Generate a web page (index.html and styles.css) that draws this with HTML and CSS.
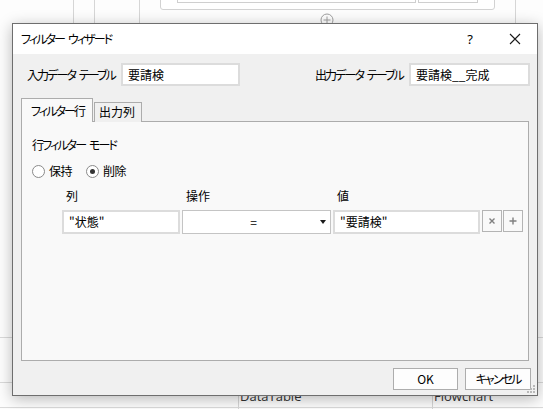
FILE: index.html
```html
<!DOCTYPE html>
<html lang="ja">
<head>
<meta charset="utf-8">
<title>フィルター ウィザード</title>
<link rel="stylesheet" href="styles.css">
</head>
<body>
<div class="desk">
  <div class="bg-vline" style="left:73px"></div>
  <div class="bg-vline" style="left:94px"></div>
  <div class="bg-vline" style="left:139px"></div>
  <div class="bg-vline" style="left:515px"></div>
  <div class="bg-card">
    <div class="bg-field bg-field-a"></div>
    <div class="bg-field bg-field-b"></div>
  </div>
  <div class="bg-plus">
    <svg width="14" height="14" viewBox="0 0 14 14"><circle cx="7" cy="7" r="6" fill="none" stroke="#a0a0a0" stroke-width="1"/><path d="M7 3.5v7M3.5 7h7" stroke="#a0a0a0" stroke-width="1"/></svg>
  </div>
  <div class="bg-hline" style="top:337px"></div>
  <div class="bg-hline" style="top:382px"></div>
  <div class="bg-hline" style="top:407px"></div>
  <div class="bg-bline" style="left:238px"></div>
  <div class="bg-bline" style="left:432px"></div>
  <div class="bg-text" style="left:240px">DataTable</div>
  <div class="bg-text" style="left:434px">Flowchart</div>

  <div class="dialog">
    <div class="titlebar">
      <span class="title kana">フィルター ウィザード</span>
      <span class="help">?</span>
      <span class="close">
        <svg width="12" height="12" viewBox="0 0 12 12"><path d="M1 1L11 11M11 1L1 11" stroke="#1a1a1a" stroke-width="1.1"/></svg>
      </span>
    </div>
    <div class="body">
      <div class="tables-row">
        <div class="field-group">
          <span class="label kana">入力データ テーブル</span>
          <div class="textbox tb-in">要請検</div>
        </div>
        <div class="field-group">
          <span class="label kana">出力データ テーブル</span>
          <div class="textbox tb-out">要請検__完成</div>
        </div>
      </div>
      <div class="tabs">
        <div class="tab tab-active"><span class="kana">フィルター行</span></div>
        <div class="tab">出力列</div>
      </div>
      <div class="panel">
        <div class="mode-label kana">行フィルター モード</div>
        <div class="radio-row">
          <span class="radio"><span class="radio-dot"></span></span><span class="radio-text">保持</span>
          <span class="radio radio-on"><span class="radio-dot"></span></span><span class="radio-text">削除</span>
        </div>
        <div class="grid">
          <div class="head">列</div>
          <div class="head">操作</div>
          <div class="head">値</div>
          <div></div>
          <div class="cell-input">"状態"</div>
          <div class="select"><span class="select-val">=</span><span class="arrow"></span></div>
          <div class="cell-input">"要請検"</div>
          <div class="btn-pair">
            <div class="mini-btn">
              <svg width="8" height="8" viewBox="0 0 8 8"><path d="M1.5 1.5L6.5 6.5M6.5 1.5L1.5 6.5" stroke="#808080" stroke-width="1.4"/></svg>
            </div>
            <div class="mini-btn">
              <svg width="8" height="8" viewBox="0 0 8 8"><path d="M4 0.5v7M0.5 4h7" stroke="#808080" stroke-width="1.4"/></svg>
            </div>
          </div>
        </div>
      </div>
      <div class="footer">
        <div class="button">OK</div>
        <div class="button btn-cancel"><span class="kana">キャンセル</span></div>
      </div>
      <div class="grip">
        <svg width="10" height="10" viewBox="0 0 10 10" fill="#b8b8b8"><rect x="7" y="1" width="2" height="2"/><rect x="4" y="4" width="2" height="2"/><rect x="7" y="4" width="2" height="2"/><rect x="1" y="7" width="2" height="2"/><rect x="4" y="7" width="2" height="2"/><rect x="7" y="7" width="2" height="2"/></svg>
      </div>
    </div>
  </div>
</div>
</body>
</html>
```

FILE: styles.css
```css
* { box-sizing: border-box; }
html, body { margin: 0; padding: 0; }
body {
  width: 543px;
  height: 409px;
  overflow: hidden;
  background: #ffffff;
  font-family: "Noto Sans CJK JP", "Noto Sans", sans-serif;
  font-size: 12px;
  color: #000;
  font-feature-settings: "palt" 1;
}
.kana {
  letter-spacing: -1.9px;
  word-spacing: 3px;
  white-space: nowrap;
}
.desk {
  position: relative;
  width: 543px;
  height: 409px;
  overflow: hidden;
  background: #fdfdfd;
}
.bg-vline {
  position: absolute;
  top: 0;
  width: 1px;
  height: 30px;
  background: #d6d6d6;
}
.bg-card {
  position: absolute;
  left: 160px;
  top: -10px;
  width: 335px;
  height: 20px;
  border: 1px solid #d2d2d2;
  border-radius: 3px;
  background: #fff;
}
.bg-field {
  position: absolute;
  top: 0;
  height: 12px;
  border: 1px solid #cfcfcf;
  background: #fff;
}
.bg-field-a { left: 16px; width: 239px; }
.bg-field-b { left: 257px; width: 60px; }
.bg-plus {
  position: absolute;
  left: 320px;
  top: 13px;
  width: 14px;
  height: 14px;
}
.bg-plus svg { display: block; }
.bg-hline {
  position: absolute;
  left: 0;
  width: 543px;
  height: 1px;
  background: #dadada;
}
.bg-bline {
  position: absolute;
  top: 390px;
  width: 1px;
  height: 19px;
  background: #d6d6d6;
}
.bg-text {
  position: absolute;
  top: 388px;
  font-family: "Open Sans", "Noto Sans", sans-serif;
  font-size: 13px;
  line-height: 16px;
  color: #333;
}

.dialog {
  position: absolute;
  left: 12px;
  top: 23px;
  width: 526px;
  height: 373px;
  border: 1px solid #6e6e6e;
  background: #f0f0f0;
  box-shadow: 0 3px 14px rgba(0, 0, 0, 0.28);
  display: flex;
  flex-direction: column;
}
.titlebar {
  height: 30px;
  flex: none;
  background: #ffffff;
  display: flex;
  align-items: center;
  padding-left: 8px;
}
.title {
  flex: 1;
  font-size: 12px;
  line-height: 16px;
  color: #000;
}
.help {
  width: 14px;
  text-align: center;
  font-family: "Noto Sans", sans-serif;
  font-size: 13px;
  margin-right: 32px;
}
.close {
  width: 12px;
  height: 12px;
  margin-right: 16px;
  display: flex;
}
.close svg { display: block; }

.body {
  position: relative;
  flex: 1;
  display: flex;
  flex-direction: column;
  padding: 9px 6px 5px 8px;
}
.tables-row {
  display: flex;
  justify-content: space-between;
  align-items: center;
  height: 23px;
  padding-left: 6px;
  padding-right: 1px;
}
.field-group {
  display: flex;
  align-items: center;
}
.label {
  line-height: 16px;
  margin-right: 6px;
}
.textbox {
  height: 23px;
  background: #fff;
  border: 2px solid #dcdcdc;
  padding: 0 5px;
  line-height: 19px;
  white-space: nowrap;
}
.tb-in { width: 119px; }
.tb-out { width: 121px; }

.tabs {
  display: flex;
  align-items: flex-end;
  margin-top: 12px;
  height: 24px;
  margin-bottom: -1px;
  position: relative;
  z-index: 1;
}
.tab {
  height: 20px;
  border: 1px solid #acacac;
  border-bottom: none;
  background: #f0f0f0;
  padding: 0 0 0 4px;
  line-height: 18px;
  width: 48px;
  margin-left: 1px;
  white-space: nowrap;
}
.tab-active {
  height: 24px;
  width: 72px;
  margin-left: 0;
  background: #f9f9f9;
  padding: 0 0 0 9px;
  line-height: 23px;
}

.panel {
  width: 508px;
  height: 240px;
  border: 1px solid #acacac;
  background: #f9f9f9;
  padding: 15px 10px 0 10px;
}
.mode-label {
  line-height: 16px;
}
.radio-row {
  display: flex;
  align-items: center;
  margin-top: 10px;
  height: 16px;
}
.radio {
  width: 13px;
  height: 13px;
  border: 1px solid #8a8a8a;
  border-radius: 50%;
  background: #fff;
  display: flex;
  align-items: center;
  justify-content: center;
}
.radio-dot {
  width: 5px;
  height: 5px;
  border-radius: 50%;
  background: transparent;
}
.radio-on .radio-dot { background: #333; }
.radio-text {
  margin-left: 4px;
  margin-right: 14px;
  line-height: 16px;
  letter-spacing: -0.5px;
}

.grid {
  display: grid;
  grid-template-columns: 118px 149px 147px 41px;
  column-gap: 2px;
  margin-left: 30px;
  margin-top: 9px;
}
.head {
  line-height: 16px;
  padding-left: 4px;
  margin-bottom: 6px;
}
.cell-input {
  height: 24px;
  background: #fff;
  border: 2px solid #dcdcdc;
  padding-left: 5px;
  line-height: 20px;
}
.select {
  height: 24px;
  background: #fff;
  border: 1px solid #c4c4c4;
  display: flex;
  align-items: center;
  padding-right: 4px;
}
.select-val {
  flex: 1;
  text-align: center;
  line-height: 20px;
  padding-left: 4px;
}
.arrow {
  width: 0;
  height: 0;
  border-left: 3.5px solid transparent;
  border-right: 3.5px solid transparent;
  border-top: 4px solid #1a1a1a;
}
.btn-pair {
  display: flex;
  gap: 1px;
  height: 22px;
  align-self: start;
}
.mini-btn {
  width: 20px;
  height: 22px;
  border: 1px solid #b4b4b4;
  background: #f9f9f9;
  display: flex;
  align-items: center;
  justify-content: center;
}
.mini-btn svg { display: block; }

.footer {
  display: flex;
  justify-content: flex-end;
  gap: 7px;
  margin-top: 7px;
}
.button {
  width: 65px;
  height: 22px;
  border: 1px solid #adadad;
  background: #fdfdfd;
  text-align: center;
  line-height: 20px;
}
.btn-cancel { width: 66px; }
.grip {
  position: absolute;
  right: 1px;
  bottom: 1px;
  width: 10px;
  height: 10px;
}
.grip svg { display: block; }
```
